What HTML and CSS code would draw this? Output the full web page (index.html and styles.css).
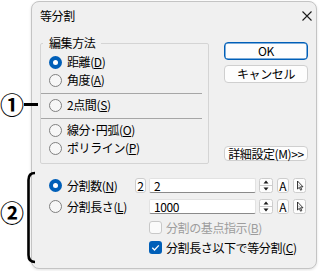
FILE: index.html
```html
<!DOCTYPE html>
<html lang="ja">
  <head>
    <meta charset="UTF-8" />
    <meta name="viewport" content="width=device-width, initial-scale=1.0" />
    <title>等分割</title>
    <link rel="stylesheet" href="styles.css">
  </head>
  <body>
    <div class="dialog">
      <div class="titlebar">
        <span class="title">等分割</span>
        <svg class="close" width="10" height="10" viewBox="0 0 10 10">
          <path d="M0.5 0.5 L9.5 9.5 M9.5 0.5 L0.5 9.5" stroke="#1a1a1a" stroke-width="1.1" />
        </svg>
      </div>

      <div class="content">
        <div class="top">
          <fieldset class="group">
            <legend>編集方法</legend>
            <label class="rrow"><span class="radio on"></span><span>距離(<u>D</u>)</span></label>
            <label class="rrow"><span class="radio"></span><span>角度(<u>A</u>)</span></label>
            <div class="sep"></div>
            <label class="rrow"><span class="radio"></span><span>2点間(<u>S</u>)</span></label>
            <div class="sep"></div>
            <label class="rrow"><span class="radio"></span><span>線分･円弧(<u>O</u>)</span></label>
            <label class="rrow"><span class="radio"></span><span>ポリライン(<u>P</u>)</span></label>
          </fieldset>

          <div class="side">
            <button class="btn ok">OK</button>
            <button class="btn cancel">キャンセル</button>
            <button class="btn more">詳細設定(M)&gt;&gt;</button>
          </div>
        </div>

        <div class="lower">
          <div class="frow">
            <label class="opt"><span class="radio on"></span><span>分割数(<u>N</u>)</span></label>
            <span class="mini">2</span>
            <span class="field">2</span>
            <svg class="spin" width="14" height="15" viewBox="0 0 14 15">
              <rect x="0.5" y="0.5" width="13" height="14" rx="2" fill="#fdfdfd" stroke="#cdcdcd" />
              <line x1="1" y1="7.5" x2="13" y2="7.5" stroke="#cdcdcd" />
              <path d="M7 2.5 L9.5 5.5 H4.5 Z" fill="#1a1a1a" />
              <path d="M4.5 9.5 H9.5 L7 12.5 Z" fill="#1a1a1a" />
            </svg>
            <span class="tool">A</span>
            <svg class="pick" width="13" height="15" viewBox="0 0 13 15">
              <rect x="0.5" y="0.5" width="12" height="14" rx="2" fill="#fdfdfd" stroke="#cdcdcd" />
              <path d="M4.5 3 V11 L6.3 9.3 L7.6 12.2 L8.8 11.6 L7.5 8.8 H10 Z" fill="#fff" stroke="#222" stroke-width="0.9" stroke-linejoin="round" />
              <path d="M5.6 6 V8.5 L6.8 7.5 Z" fill="#999" />
            </svg>
          </div>

          <div class="frow">
            <label class="opt"><span class="radio"></span><span>分割長さ(<u>L</u>)</span></label>
            <span class="blank"></span>
            <span class="field">1000</span>
            <svg class="spin" width="14" height="15" viewBox="0 0 14 15">
              <rect x="0.5" y="0.5" width="13" height="14" rx="2" fill="#fdfdfd" stroke="#cdcdcd" />
              <line x1="1" y1="7.5" x2="13" y2="7.5" stroke="#cdcdcd" />
              <path d="M7 2.5 L9.5 5.5 H4.5 Z" fill="#1a1a1a" />
              <path d="M4.5 9.5 H9.5 L7 12.5 Z" fill="#1a1a1a" />
            </svg>
            <span class="tool">A</span>
            <svg class="pick" width="13" height="15" viewBox="0 0 13 15">
              <rect x="0.5" y="0.5" width="12" height="14" rx="2" fill="#fdfdfd" stroke="#cdcdcd" />
              <path d="M4.5 3 V11 L6.3 9.3 L7.6 12.2 L8.8 11.6 L7.5 8.8 H10 Z" fill="#fff" stroke="#222" stroke-width="0.9" stroke-linejoin="round" />
              <path d="M5.6 6 V8.5 L6.8 7.5 Z" fill="#999" />
            </svg>
          </div>

          <label class="crow off"><span class="check"></span><span>分割の基点指示(<u>B</u>)</span></label>
          <label class="crow">
            <span class="check on">
              <svg width="13" height="13" viewBox="0 0 13 13">
                <path d="M3.3 6.8 L5.5 9 L9.8 4.4" fill="none" stroke="#fff" stroke-width="1.3" />
              </svg>
            </span>
            <span>分割長さ以下で等分割(<u>C</u>)</span>
          </label>
        </div>
      </div>
    </div>

    <!-- annotation marks laid over the screenshot -->
    <svg class="annot" width="40" height="271" viewBox="0 0 40 271">
      <line x1="24" y1="104.5" x2="38" y2="104.5" stroke="#000" stroke-width="3" />
      <path d="M35 173 Q28.5 173 28.5 180 V255 Q28.5 262 35 262" fill="none" stroke="#000" stroke-width="2.6" />
    </svg>
    <span class="mark m1">①</span>
    <span class="mark m2">②</span>
  </body>
</html>
```

FILE: styles.css
```css
body {
  margin: 0;
  width: 323px;
  height: 271px;
  overflow: hidden;
  position: relative;
  background-color: #fff;
  font-family: "Noto Sans CJK JP", "Noto Sans", sans-serif;
  font-size: 12px;
  letter-spacing: -0.4px;
  color: #000;
}

u {
  text-underline-offset: 1px;
}

.dialog {
  margin: 1px 0 0 31px;
  width: 286px;
  height: 268px;
  box-sizing: border-box;
  border: 1px solid #c4c4c4;
  border-radius: 8px;
  background-color: #f0f0f0;
  box-shadow: 0 1px 3px rgba(0, 0, 0, 0.12);
}

.titlebar {
  height: 28px;
  display: flex;
  align-items: center;
  justify-content: space-between;
  padding: 0 4px 0 8px;
}

.title {
  line-height: 16px;
}

.content {
  padding: 5px 8px 0 8px;
}

.top {
  display: flex;
  justify-content: space-between;
}

.group {
  margin: 0;
  padding: 2px 8px 6px 8px;
  width: 169px;
  min-width: 0;
  box-sizing: border-box;
  border: 1px solid #d4d4d4;
  border-radius: 2px;
}

.group legend {
  margin-left: -6px;
  padding: 0 6px;
  line-height: 16px;
}

.rrow {
  display: flex;
  align-items: center;
  gap: 5px;
  height: 18px;
  line-height: 18px;
  white-space: nowrap;
}

.radio {
  flex: none;
  width: 13px;
  height: 13px;
  box-sizing: border-box;
  border: 1px solid #808080;
  border-radius: 50%;
  background-color: #f7f7f7;
}

.radio.on {
  display: flex;
  align-items: center;
  justify-content: center;
  border: none;
  background-color: #005fb8;
}

.radio.on::after {
  content: "";
  width: 5px;
  height: 5px;
  border-radius: 50%;
  background-color: #fff;
}

.sep {
  height: 1px;
  margin: 4px -2px 2px -8px;
  background-color: #a6a6a6;
}

.side {
  width: 84px;
  display: flex;
  flex-direction: column;
}

.btn {
  height: 18px;
  padding: 0;
  box-sizing: border-box;
  border: 1px solid #cfcfcf;
  border-radius: 4px;
  background-color: #fdfdfd;
  font-family: inherit;
  font-size: 12px;
  letter-spacing: inherit;
  line-height: 16px;
  color: #000;
}

.btn.ok {
  margin-top: 7px;
  border-color: #005fb8;
  box-shadow: inset 0 0 0 0.5px #005fb8;
}

.btn.cancel {
  margin-top: 5px;
}

.btn.more {
  margin-top: auto;
  margin-bottom: 3px;
  height: 15px;
  line-height: 13px;
  white-space: nowrap;
}

.lower {
  margin-top: 11px;
  padding-left: 9px;
}

.frow {
  display: flex;
  align-items: center;
  height: 21px;
}

.opt {
  width: 86px;
  display: flex;
  align-items: center;
  gap: 5px;
  white-space: nowrap;
}

.mini,
.tool {
  height: 15px;
  box-sizing: border-box;
  border: 1px solid #cdcdcd;
  border-radius: 3px;
  background-color: #fdfdfd;
  text-align: center;
  line-height: 13px;
  letter-spacing: 0;
}

.mini {
  width: 11px;
  margin-right: 3px;
}

.blank {
  width: 11px;
  margin-right: 3px;
}

.field {
  width: 107px;
  height: 15px;
  margin-right: 3px;
  padding-left: 4px;
  box-sizing: border-box;
  border: 1px solid #e2e2e2;
  border-bottom-color: #8a8a8a;
  border-radius: 2px;
  background-color: #fff;
  line-height: 13px;
}

.spin {
  margin-right: 4px;
}

.tool {
  width: 12px;
  margin-right: 4px;
}

.crow {
  display: flex;
  align-items: center;
  gap: 4px;
  height: 20px;
  padding-left: 100px;
  white-space: nowrap;
}

.crow.off {
  color: #9d9d9d;
}

.check {
  flex: none;
  width: 13px;
  height: 13px;
  box-sizing: border-box;
  border: 1px solid #c8c8c8;
  border-radius: 3px;
  background-color: #fafafa;
}

.check.on {
  border: none;
  background-color: #005fb8;
}

.check svg {
  display: block;
}

.annot {
  position: absolute;
  left: 0;
  top: 0;
}

.mark {
  position: absolute;
  left: 0;
  font-size: 24px;
  line-height: 24px;
  font-weight: 700;
  letter-spacing: 0;
}

.m1 {
  top: 92px;
}

.m2 {
  top: 200px;
}
```
